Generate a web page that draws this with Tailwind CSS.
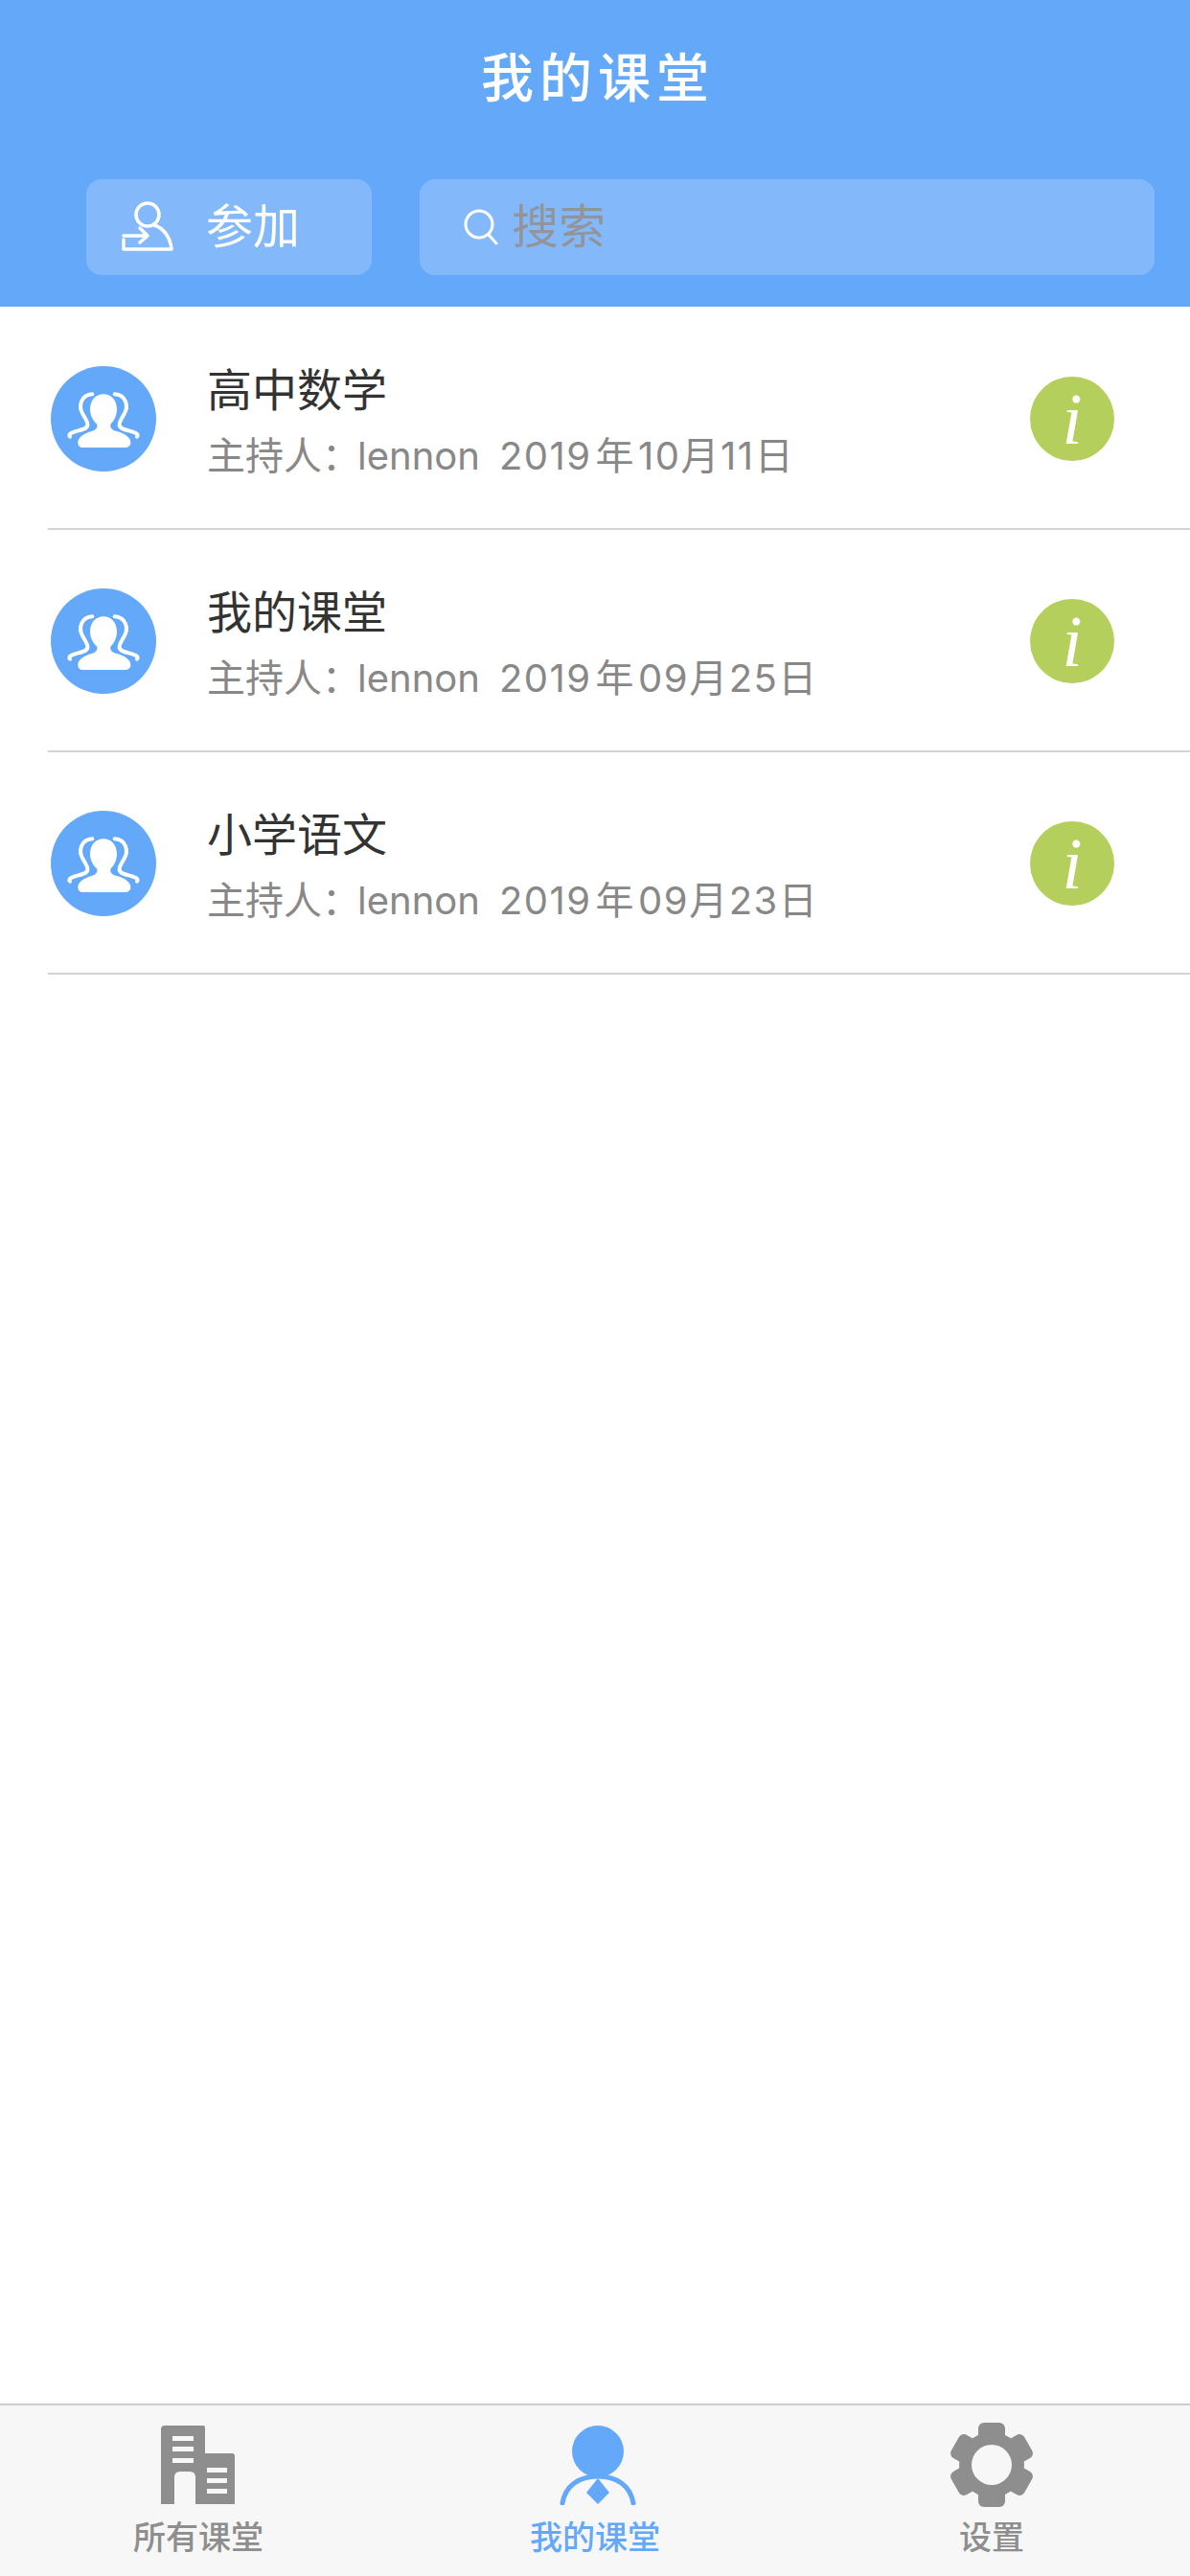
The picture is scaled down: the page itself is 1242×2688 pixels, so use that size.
<!DOCTYPE html>
<html>
<head>
  <meta charset="utf-8">
  <title>我的课堂</title>
  <script src="https://cdn.jsdelivr.net/npm/@tailwindcss/browser@4"></script>
</head>
<body class="bg-white h-screen flex flex-col font-['Inter','Noto_Sans_CJK_SC',sans-serif]">
  <header class="h-[320px] bg-[#64a8fa] flex flex-col shrink-0">
    <h1 class="h-[187px] pb-[24px] pl-[6px] flex items-center justify-center text-white text-[55px] tracking-[6px] font-medium">我的课堂</h1>
    <div class="flex gap-[50px] pl-[90px] pr-[37px]">
      <button class="w-[298px] h-[100px] bg-white/20 rounded-[16px] flex items-center pl-[37px] gap-[34px]">
        <svg class="w-[54px] h-[52px] mb-[2px]" viewBox="0 0 54 52" fill="none" stroke="white" stroke-width="3.5" stroke-linecap="round" stroke-linejoin="round">
          <circle cx="27" cy="14" r="12"/>
          <path d="M34 25 C44 28 51 38 52 50 H2 V40"/>
          <path d="M2 36 H26 M19 28 L27 36 L19 43"/>
        </svg>
        <span class="text-white text-[49px]">参加</span>
      </button>
      <div class="flex-1 h-[100px] bg-white/20 rounded-[16px] flex items-center pl-[46px] gap-[14px]">
        <svg class="w-[36px] h-[38px]" viewBox="0 0 36 38" fill="none" stroke="white" stroke-width="3" stroke-linecap="round">
          <circle cx="16" cy="16" r="14"/>
          <path d="M26 27 L34 36"/>
        </svg>
        <span class="text-[#939398] text-[49px]">搜索</span>
      </div>
    </div>
  </header>

  <main class="flex-1 pt-[1px]">
    <div class="h-[232px] ml-[50px] border-b-2 border-[#d2d2d2] flex items-center">
      <svg class="w-[110px] h-[110px] ml-[3px] mt-[1px] shrink-0" viewBox="0 0 330 330">
        <circle cx="165" cy="165" r="165" fill="#64a8fa"/>
        <path fill="white" d="M165 88 C140 88 123 108 123 135 C123 155 133 172 145 182 C147 195 140 200 125 205 C100 213 85 225 85 240 C85 250 92 255 100 255 L232 255 C242 255 250 250 250 240 C250 225 235 213 210 205 C192 200 185 195 187 182 C198 172 207 155 207 135 C207 108 190 88 165 88Z"/>
        <path fill="none" stroke="white" stroke-width="12" stroke-linecap="round" d="M130 88 C95 90 85 125 100 150 C115 175 125 190 100 198 C80 205 50 210 60 221 M200 88 C235 90 245 125 230 150 C215 175 205 190 230 198 C250 205 280 210 270 221"/>
      </svg>
      <div class="ml-[53px] flex-1 mt-[8px]">
        <div class="text-[47px] leading-[58px] text-[#333333]">高中数学</div>
        <div class="text-[40px] leading-[52px] mt-[14px] text-[#888888]"><span class="mr-[-3px]">主持人：</span>lennon<span class="ml-[20px] tracking-[1.5px]">2019<span class="ml-[4px] mr-[3px]">年</span>10月11日</span></div>
      </div>
      <div class="w-[88px] h-[88px] mr-[79px] mt-[1px] rounded-full bg-[#b4cf5b] flex items-center justify-center text-white italic text-[76px] leading-none font-['Liberation_Serif',serif]">i</div>
    </div>
    <div class="h-[232px] ml-[50px] border-b-2 border-[#d2d2d2] flex items-center">
      <svg class="w-[110px] h-[110px] ml-[3px] mt-[1px] shrink-0" viewBox="0 0 330 330">
        <circle cx="165" cy="165" r="165" fill="#64a8fa"/>
        <path fill="white" d="M165 88 C140 88 123 108 123 135 C123 155 133 172 145 182 C147 195 140 200 125 205 C100 213 85 225 85 240 C85 250 92 255 100 255 L232 255 C242 255 250 250 250 240 C250 225 235 213 210 205 C192 200 185 195 187 182 C198 172 207 155 207 135 C207 108 190 88 165 88Z"/>
        <path fill="none" stroke="white" stroke-width="12" stroke-linecap="round" d="M130 88 C95 90 85 125 100 150 C115 175 125 190 100 198 C80 205 50 210 60 221 M200 88 C235 90 245 125 230 150 C215 175 205 190 230 198 C250 205 280 210 270 221"/>
      </svg>
      <div class="ml-[53px] flex-1 mt-[8px]">
        <div class="text-[47px] leading-[58px] text-[#333333]">我的课堂</div>
        <div class="text-[40px] leading-[52px] mt-[14px] text-[#888888]"><span class="mr-[-3px]">主持人：</span>lennon<span class="ml-[20px] tracking-[1.5px]">2019<span class="ml-[4px] mr-[3px]">年</span>09月25日</span></div>
      </div>
      <div class="w-[88px] h-[88px] mr-[79px] mt-[1px] rounded-full bg-[#b4cf5b] flex items-center justify-center text-white italic text-[76px] leading-none font-['Liberation_Serif',serif]">i</div>
    </div>
    <div class="h-[232px] ml-[50px] border-b-2 border-[#d2d2d2] flex items-center">
      <svg class="w-[110px] h-[110px] ml-[3px] mt-[1px] shrink-0" viewBox="0 0 330 330">
        <circle cx="165" cy="165" r="165" fill="#64a8fa"/>
        <path fill="white" d="M165 88 C140 88 123 108 123 135 C123 155 133 172 145 182 C147 195 140 200 125 205 C100 213 85 225 85 240 C85 250 92 255 100 255 L232 255 C242 255 250 250 250 240 C250 225 235 213 210 205 C192 200 185 195 187 182 C198 172 207 155 207 135 C207 108 190 88 165 88Z"/>
        <path fill="none" stroke="white" stroke-width="12" stroke-linecap="round" d="M130 88 C95 90 85 125 100 150 C115 175 125 190 100 198 C80 205 50 210 60 221 M200 88 C235 90 245 125 230 150 C215 175 205 190 230 198 C250 205 280 210 270 221"/>
      </svg>
      <div class="ml-[53px] flex-1 mt-[8px]">
        <div class="text-[47px] leading-[58px] text-[#333333]">小学语文</div>
        <div class="text-[40px] leading-[52px] mt-[14px] text-[#888888]"><span class="mr-[-3px]">主持人：</span>lennon<span class="ml-[20px] tracking-[1.5px]">2019<span class="ml-[4px] mr-[3px]">年</span>09月23日</span></div>
      </div>
      <div class="w-[88px] h-[88px] mr-[79px] mt-[1px] rounded-full bg-[#b4cf5b] flex items-center justify-center text-white italic text-[76px] leading-none font-['Liberation_Serif',serif]">i</div>
    </div>
  </main>

  <nav class="h-[180px] shrink-0 bg-[#f7f7f7] border-t-2 border-[#cccccc] grid grid-cols-3 text-[34px] leading-[44px] font-medium">
    <div class="flex flex-col items-center text-[#8e8e8e]">
      <svg class="w-[80px] h-[84px] mt-[20px]" viewBox="0 0 80 84">
        <path fill="#8e8e8e" d="M5 1 H45 Q47 1 47 3 V30 H75 Q78 30 78 33 V83 H37 V55 Q37 49 31 49 H21 Q15 49 15 55 V83 H1 V5 Q1 1 5 1Z"/>
        <path fill="#f7f7f7" d="M13 12 H35 V17 H13Z M13 23 H35 V28 H13Z M13 35 H35 V40 H13Z M49 45 H70 V50 H49Z M49 56 H70 V61 H49Z M49 67 H70 V72 H49Z"/>
      </svg>
      <span class="mt-[12px]">所有课堂</span>
    </div>
    <div class="flex flex-col items-center text-[#64a8fa]">
      <svg class="w-[80px] h-[84px] mt-[20px] ml-[6px]" viewBox="0 0 80 84">
        <circle cx="40" cy="28" r="27" fill="#64a8fa"/>
        <path fill="none" stroke="#64a8fa" stroke-width="5" stroke-linecap="round" d="M3 82 C6 64 20 54 40 54 C60 54 74 64 77 82"/>
        <path fill="#64a8fa" d="M40 56 L52 71 L40 83 L28 71Z"/>
      </svg>
      <span class="mt-[12px]">我的课堂</span>
    </div>
    <div class="flex flex-col items-center text-[#8e8e8e]">
      <svg class="w-[90px] h-[90px] mt-[17px]" viewBox="0 0 90 90">
        <g fill="#8e8e8e">
          <circle cx="45" cy="45" r="34"/>
          <rect x="31" y="1" width="28" height="88" rx="6"/>
          <rect x="31" y="1" width="28" height="88" rx="6" transform="rotate(60 45 45)"/>
          <rect x="31" y="1" width="28" height="88" rx="6" transform="rotate(120 45 45)"/>
        </g>
        <circle cx="45" cy="45" r="21" fill="#f7f7f7"/>
      </svg>
      <span class="mt-[9px]">设置</span>
    </div>
  </nav>
</body>
</html>
